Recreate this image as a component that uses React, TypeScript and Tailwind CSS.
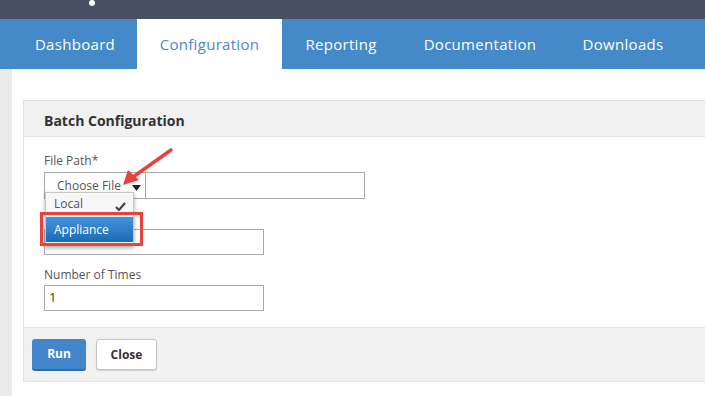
const tabs = [
  { name: "Dashboard", w: "w-[124px]" },
  { name: "Configuration", w: "w-[145px]" },
  { name: "Reporting", w: "w-[118px]" },
  { name: "Documentation", w: "w-[160px]" },
  { name: "Downloads", w: "w-[126px]" },
];

function Field({
  label,
  value,
  className,
  gap = "mt-[4px]",
}: {
  label?: string;
  value?: string;
  className?: string;
  gap?: string;
}) {
  return (
    <div className={className}>
      <div className="h-[16px] text-[12px] leading-[16px] text-[#555]">{label}</div>
      <div
        className={`${gap} flex h-[26px] w-[220px] items-center border border-[#a8a8a8] bg-white px-[4px] text-[13px] text-[#333]`}
      >
        {value}
      </div>
    </div>
  );
}

export default function App() {
  return (
    <div
      className="relative h-[396px] w-[705px] overflow-hidden bg-white"
      style={{ fontFamily: '"Open Sans", "DejaVu Sans", sans-serif' }}
    >
      {/* top bar */}
      <div className="flex h-[19px] items-start bg-[#474f63] pl-[89px]">
        <div className="h-[6px] w-[6px] rounded-full bg-white" />
      </div>

      {/* main nav */}
      <div className="flex h-[50px] bg-[#4489c8] pl-[13px]">
        {tabs.map((t) => (
          <div
            key={t.name}
            className={
              t.name === "Configuration"
                ? `flex ${t.w} items-center justify-center bg-white text-[15px] tracking-[0.3px] text-[#4a8ad0]`
                : `flex ${t.w} items-center justify-center text-[15px] tracking-[0.3px] text-white`
            }
          >
            {t.name}
          </div>
        ))}
      </div>

      <div className="flex h-[327px]">
        <div className="w-[12px] bg-[#ebebeb]" />
        <div className="flex-1 pl-[11px] pt-[31px]">
          <div className="border border-r-0 border-[#e2e2e2]">
            <div className="flex h-[36px] items-center border-b border-[#e2e2e2] bg-[#f1f1f1] pl-[20px] pt-[3px] text-[14px] font-bold text-[#333]">
              Batch Configuration
            </div>

            <div className="relative pb-[16px] pl-[20px] pt-[16px]">
              <div className="text-[12px] leading-[16px] text-[#555]">File Path*</div>
              <div className="mt-[3px] flex h-[27px] w-[321px]">
                <div className="flex w-[101px] items-center border border-r-0 border-[#a8a8a8] bg-white pl-[12px] text-[12px] text-[#555]">
                  Choose File
                  <svg width="9" height="6" viewBox="0 0 9 6" className="ml-[11px] mt-[4px]">
                    <path d="M0 0 L9 0 L4.5 6 Z" fill="#222" />
                  </svg>
                </div>
                <div className="flex-1 border border-[#a8a8a8] bg-white" />
              </div>

              <Field className="mt-[10px]" />
              <Field label="Number of Times" value="1" className="mt-[12px]" gap="mt-[2px]" />

              {/* dropdown */}
              <div className="absolute left-[21px] top-[55px] w-[89px] border border-[#c8c8c8] bg-[#f7f7f7] pb-[3px] shadow-[0_2px_4px_rgba(0,0,0,0.35)]">
                <div className="flex h-[22px] items-center justify-between pl-[8px] pr-[7px] text-[12px] text-[#555]">
                  Local
                  <svg width="11" height="9" viewBox="0 0 11 9" className="mt-[5px]">
                    <path d="M1 5 L4 8 L10 1" stroke="#444" strokeWidth="2.2" fill="none" />
                  </svg>
                </div>
                <div className="mt-[2px] flex h-[25px] items-center bg-gradient-to-b from-[#4394dc] to-[#1c69b5] pl-[8px] text-[12px] text-white">
                  Appliance
                </div>
              </div>

              {/* highlight box */}
              <div className="absolute left-[16px] top-[75px] h-[34px] w-[103px] border-[3px] border-[#e9413e]" />
            </div>

            <div className="flex h-[54px] items-start gap-[10px] border-t border-[#e2e2e2] bg-[#f1f1f1] pl-[8px] pt-[11px]">
              <button className="h-[32px] w-[54px] rounded-[3px] border-b-2 border-[#2b6cb0] bg-[#4387ca] text-[12px] font-bold text-white">
                Run
              </button>
              <button className="h-[31px] w-[61px] rounded-[3px] border border-[#c4c4c4] bg-white text-[12px] font-bold text-[#333] shadow-[0_1px_1px_rgba(0,0,0,0.15)]">
                Close
              </button>
            </div>
          </div>
        </div>
      </div>

      {/* callout arrow */}
      <svg
        className="pointer-events-none absolute left-0 top-0"
        width="705"
        height="396"
        viewBox="0 0 705 396"
      >
        <line x1="171" y1="150" x2="133" y2="177" stroke="#e9413e" strokeWidth="3.5" strokeLinecap="round" />
        <path d="M123 185 L128 170 L139 180 Z" fill="#e9413e" />
      </svg>
    </div>
  );
}
